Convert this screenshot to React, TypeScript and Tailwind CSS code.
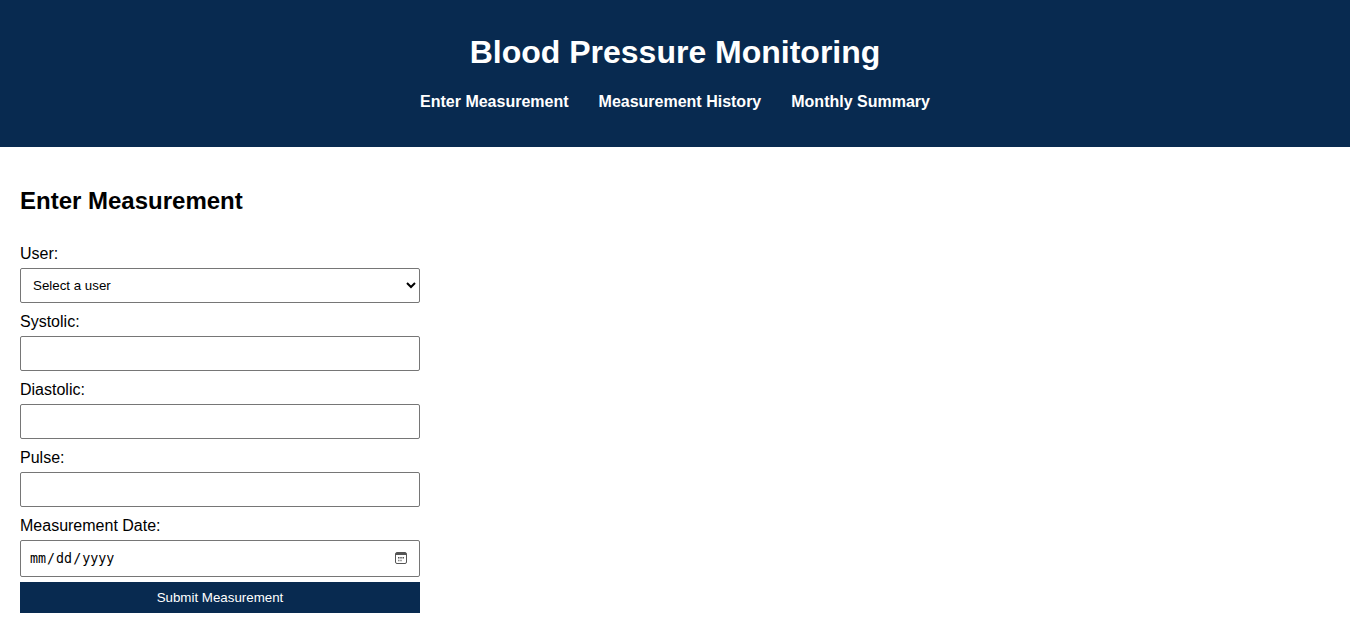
export default function App() {
  const links = ["Enter Measurement", "Measurement History", "Monthly Summary"];

  const field = "block w-full h-[35px] border border-[#767676] rounded-[2px] px-2 text-[13.33px] text-black bg-white mb-[10px]";
  const label = "block text-[16px] leading-[18px] mb-[5px] text-black";

  return (
    <div className="min-h-screen bg-white font-['Liberation_Sans',Arial,sans-serif]">
      <header className="bg-[#082a50] text-white text-center pt-[34px] pb-[36px]">
        <h1 className="text-[32px] font-bold leading-[37px]">Blood Pressure Monitoring</h1>
        <nav className="mt-[22px] flex justify-center gap-[30px] text-[16px] font-bold leading-[18px]">
          {links.map((l) => (
            <a key={l} href="#" className="text-white">
              {l}
            </a>
          ))}
        </nav>
      </header>

      <main className="p-5">
        <h2 className="mt-5 text-2xl font-bold leading-[28px] text-black">Enter Measurement</h2>

        <form className="mt-[30px] w-[400px]">
          <label className={label}>User:</label>
          <select className={field} defaultValue="">
            <option value="">Select a user</option>
          </select>

          <label className={label}>Systolic:</label>
          <input type="number" className={field} />

          <label className={label}>Diastolic:</label>
          <input type="number" className={field} />

          <label className={label}>Pulse:</label>
          <input type="number" className={field} />

          <label className={label}>Measurement Date:</label>
          <div className="relative mb-[5px]">
            <input
              type="date"
              className="block w-full h-[37px] border border-[#767676] rounded-[2px] px-2 text-[13.33px] font-['DejaVu_Sans_Mono',monospace] text-black bg-white [&::-webkit-calendar-picker-indicator]:opacity-0"
            />
            {/* calendar glyph drawn over the hidden native picker */}
            <svg
              className="absolute right-[13px] top-[12px] pointer-events-none"
              width="12"
              height="12"
              viewBox="0 0 12 12"
            >
              <rect x="0.5" y="0.5" width="11" height="11" rx="1.5" fill="none" stroke="#555" />
              <rect x="1" y="1" width="10" height="2" fill="#555" />
              <rect x="3" y="5" width="1.5" height="1.5" fill="#555" />
              <rect x="5.25" y="5" width="1.5" height="1.5" fill="#555" />
              <rect x="7.5" y="5" width="1.5" height="1.5" fill="#555" />
              <rect x="3" y="7.75" width="1.5" height="1.5" fill="#888" />
              <rect x="5.25" y="7.75" width="1.5" height="1.5" fill="#888" />
            </svg>
          </div>

          <button
            type="button"
            className="block w-full h-[31px] bg-[#082a50] text-white text-[13.33px] leading-[16px]"
          >
            Submit Measurement
          </button>
        </form>
      </main>
    </div>
  );
}
